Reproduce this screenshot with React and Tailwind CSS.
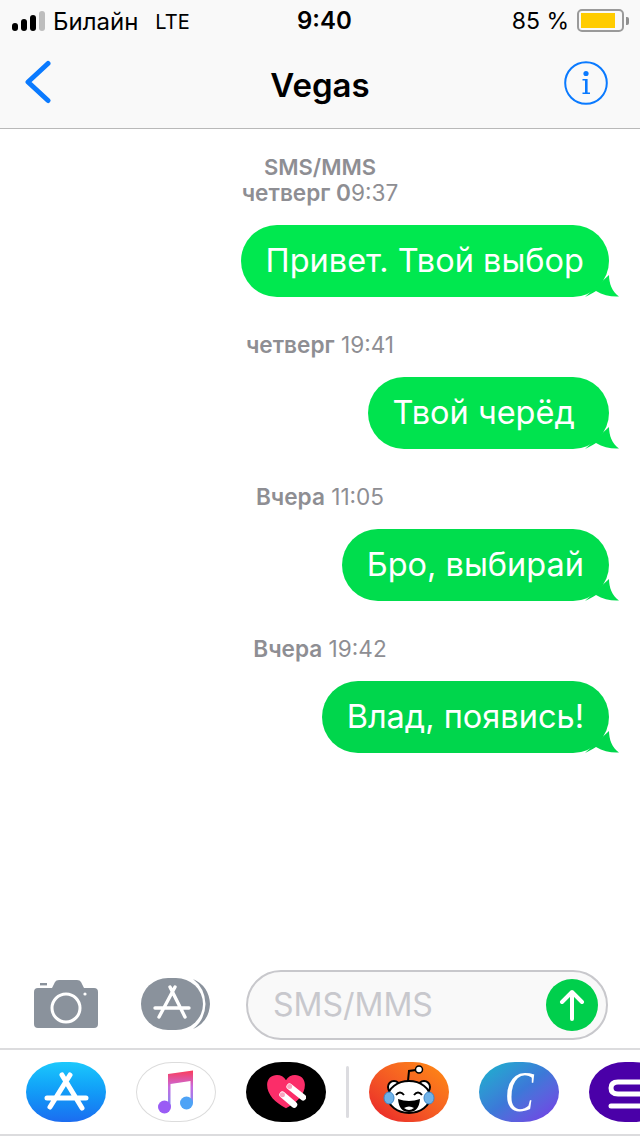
// App.jsx
import React from 'react';

const FONT = "font-['Inter','Noto_Sans',sans-serif]";

const messages = [
    { id: 1, heading: 'SMS/MMS', day: 'четверг 0', time: '9:37', text: 'Привет. Твой выбор', bubble: 'bg-[#00e84f]', tail: 'text-[#00e84f]' },
    { id: 2, day: 'четверг', time: ' 19:41', text: 'Твой черёд ', bubble: 'bg-[#00e34e]', tail: 'text-[#00e34e]' },
    { id: 3, day: 'Вчера', time: ' 11:05', text: 'Бро, выбирай', bubble: 'bg-[#00dd4d]', tail: 'text-[#00dd4d]' },
    { id: 4, day: 'Вчера', time: ' 19:42', text: 'Влад, появись!', bubble: 'bg-[#00d64c]', tail: 'text-[#00d64c]' },
];

function StatusBar() {
    return (
        <div className="h-[40px] flex items-center justify-between pl-[12px] pr-[11px] pt-[3px] text-[24px] text-black relative">
            <div className="flex items-center">
                <div className="flex items-end gap-[3px] h-[20px] mb-[2px]">
                    <span className="w-[6px] h-[8px] bg-black rounded-[3px]"></span>
                    <span className="w-[6px] h-[12px] bg-black rounded-[3px]"></span>
                    <span className="w-[6px] h-[16px] bg-black rounded-[3px]"></span>
                    <span className="w-[6px] h-[20px] bg-[#bdbdbd] rounded-[3px]"></span>
                </div>
                <span className="ml-[8px]">Билайн</span>
                <span className="ml-[17px] text-[20px]">LTE</span>
            </div>
            <span className="absolute left-[297px] top-[3px] font-semibold text-[24px]">9:40</span>
            <div className="flex items-center">
                <span className="text-[23px]">85 %</span>
                <div className="ml-[8px] w-[47px] h-[23px] border-2 border-[#9a9a9a] rounded-[5px] p-[2px] pr-[7px] mt-[-2px]">
                    <div className="h-full bg-[#ffcc00]"></div>
                </div>
                <span className="ml-[2px] w-[3px] h-[8px] bg-[#8f8f8f] rounded-r-[2px] mt-[-2px]"></span>
            </div>
        </div>
    );
}

function NavBar() {
    return (
        <div className="h-[89px] border-b border-[#b9b9b9] flex items-center justify-between pl-[24px] pr-[32px] relative">
            <svg className="mt-[-5px]" width="28" height="44" viewBox="0 0 28 44" fill="none">
                <path d="M24 3.5 L4 22 L24 40.5" stroke="#0a7aff" strokeWidth="5" strokeLinecap="round" strokeLinejoin="round" />
            </svg>
            <h1 className="absolute inset-x-0 top-[22px] text-center text-[33px] leading-[46px] font-semibold text-black pointer-events-none">Vegas</h1>
            <svg className="mt-[-2px]" width="44" height="44" viewBox="0 0 44 44" fill="none">
                <circle cx="22" cy="22" r="20.8" stroke="#0a7aff" strokeWidth="2" />
                <circle cx="22" cy="12.5" r="2.6" fill="#0a7aff" />
                <path d="M18.5 18 H23.6 V31.5 H26 V33 H18.5 V31.5 H21 V19.5 H18.5 Z" fill="#0a7aff" />
            </svg>
        </div>
    );
}

function Message({ message }) {
    return (
        <div className="flex flex-col mb-[35px]">
            <div className="text-center text-[22.6px] leading-[26px] text-[#8e8e93]">
                {message.heading && <div className="font-semibold text-[22px]">{message.heading}</div>}
                <div className="whitespace-pre"><span className="font-semibold">{message.day}</span>{message.time}</div>
            </div>
            <div className="flex justify-end pr-[31px] mt-[19px]">
                <div className={`relative h-[72px] rounded-[36px] px-[25px] flex items-center text-white text-[32.5px] whitespace-pre ${message.bubble}`}>
                    {message.text}
                    <svg className={`absolute -right-[10px] bottom-0 ${message.tail}`} width="34" height="22" viewBox="0 0 34 22" fill="currentColor">
                        <path d="M24 0 C24 8 27 17 34 21.5 C26 22 18 20 11 16 C8 18 4 20 0 22 Z" />
                    </svg>
                </div>
            </div>
        </div>
    );
}

function Composer() {
    return (
        <div className="h-[88px] flex items-center pl-[34px] pr-[32px]">
            <svg width="64" height="48" viewBox="0 0 64 48">
                <path d="M4 8 H18 L21 2 Q22 0 25 0 H43 Q46 0 47 2 L50 8 H60 Q64 8 64 12 V44 Q64 48 60 48 H4 Q0 48 0 44 V12 Q0 8 4 8 Z" fill="#8a929c" />
                <rect x="6" y="3" width="7" height="2.4" fill="#8a929c" />
                <circle cx="32" cy="28" r="14" fill="none" stroke="#fff" strokeWidth="3" />
                <circle cx="51" cy="14" r="1.6" fill="#fff" />
            </svg>
            <svg className="ml-[43px]" width="70" height="52" viewBox="0 0 70 52">
                <path d="M52 1 Q68 8 69 26 Q68 44 52 51 Q64 42 64.500 26 Q64 10 52 1 Z" fill="#8a929c" />
                <rect x="0" y="0" width="62" height="52" rx="27" ry="26" fill="#8a929c" />
                <path d="M29 9 L44 39 M34 9 L18 39 M14 30 H48" fill="none" stroke="#fff" strokeWidth="3.400" strokeLinecap="round" />
            </svg>
            <div className="ml-[35px] mt-[2px] flex-1 h-[70px] rounded-[35px] border-2 border-[#c8c8cc] bg-[#f9f9f9] flex items-center justify-between pl-[25px] pr-[8px]">
                <span className="text-[32px] text-[#c8c8cd]">SMS/MMS</span>
                <div className="w-[52px] h-[52px] rounded-full bg-[#00cf4c] flex items-center justify-center">
                    <svg width="26" height="32" viewBox="0 0 26 32" fill="none">
                        <path d="M13 30 V3 M3 13 L13 3 L23 13" stroke="#fff" strokeWidth="4" strokeLinecap="round" strokeLinejoin="round" />
                    </svg>
                </div>
            </div>
        </div>
    );
}

function AppIcon({ className, children }) {
    return (
        <div className={`w-[80px] h-[60px] shrink-0 rounded-[36px/30px] flex items-center justify-center relative ${className}`}>
            {children}
        </div>
    );
}

function Dock() {
    return (
        <div className="h-[88px] border-y-2 border-[#dcdcde] flex items-center pl-[26px] overflow-hidden">
            <AppIcon className="bg-gradient-to-b from-[#1dc8fc] to-[#1c6cf0]">
                <svg width="80" height="60" viewBox="0 0 80 60" fill="none">
                    <path d="M36 13 L56 46 M44 13 L24 45 M21 36 H60" stroke="#fff" strokeWidth="5" strokeLinecap="round" />
                </svg>
            </AppIcon>
            <AppIcon className="ml-[30px] bg-white border border-[#dcdcdc]">
                <svg width="36" height="44" viewBox="0 0 36 44" fill="none">
                    <defs>
                        <linearGradient id="note" x1="0" y1="0" x2="0" y2="1">
                            <stop offset="0" stopColor="#fb3c5a" />
                            <stop offset="0.45" stopColor="#c76be0" />
                            <stop offset="1" stopColor="#7d8df2" />
                        </linearGradient>
                    </defs>
                    <path d="M10 4 L35 0.500 V33 H32.500 V11 L12.500 14 V37 H10 Z" fill="url(#note)" />
                    <circle cx="6.500" cy="37" r="6.500" fill="#9a5cf5" />
                    <circle cx="28.500" cy="33" r="6.500" fill="#4ea3f6" />
                </svg>
            </AppIcon>
            <AppIcon className="ml-[30px] bg-black">
                <svg width="40" height="36" viewBox="0 0 44 40">
                    <path d="M22 38 C10 32 1 23 1 12 C1 5 6 1 12 1 C16 1 20 3 22 7 C24 3 28 1 32 1 C38 1 43 5 43 12 C43 23 34 32 22 38 Z" fill="#fb2d69" />
                    <path d="M26 14 L41 26 M18 23 L31 34" stroke="#fff" strokeWidth="7" strokeLinecap="round" />
                    <circle cx="26" cy="14" r="2.800" fill="#f9a4bf" />
                    <circle cx="18" cy="23" r="2.800" fill="#f9a4bf" />
                </svg>
            </AppIcon>
            <div className="ml-[20px] w-[3px] h-[52px] bg-[#dcdce0] rounded-[2px] shrink-0"></div>
            <AppIcon className="ml-[20px] bg-gradient-to-tr from-[#e8112a] to-[#ff8c0e]">
                <svg width="64" height="54" viewBox="0 0 64 54" fill="none">
                    <path d="M31 16 L32 6 L39 5" stroke="#000" strokeWidth="2" />
                    <circle cx="42" cy="4.500" r="3.500" fill="#fff" stroke="#000" strokeWidth="1.500" />
                    <circle cx="17" cy="22" r="6" fill="#fff" stroke="#000" strokeWidth="2" />
                    <circle cx="47" cy="22" r="6" fill="#fff" stroke="#000" strokeWidth="2" />
                    <ellipse cx="32" cy="32" rx="21" ry="16" fill="#fff" stroke="#000" strokeWidth="2" />
                    <path d="M19 30 Q23 25 27 30 M37 30 Q41 25 45 30" stroke="#000" strokeWidth="2" />
                    <path d="M21 34 Q32 38 43 34 Q42 47 32 47 Q22 47 21 34 Z" fill="#000" />
                    <path d="M27 43 Q32 40 37 43 Q32 47 27 43 Z" fill="#fff" />
                    <ellipse cx="12" cy="33" rx="5" ry="6" fill="#6fb2e8" stroke="#3d86c8" />
                    <ellipse cx="52" cy="33" rx="5" ry="6" fill="#6fb2e8" stroke="#3d86c8" />
                </svg>
            </AppIcon>
            <AppIcon className="ml-[30px] bg-gradient-to-br from-[#0fb5cc] via-[#3c78d8] to-[#7434e6]">
                <span className="font-['Liberation_Serif',serif] italic text-white text-[58px] leading-[60px] scale-x-75">C</span>
            </AppIcon>
            <AppIcon className="ml-[30px] bg-[#4a00a8]">
                <svg width="80" height="60" viewBox="0 0 80 60" fill="none">
                    <path d="M62 20 H29 Q22 20 22 26 Q22 32 29 32 H62" stroke="#fff" strokeWidth="5" />
                    <path d="M22 44 H62" stroke="#fff" strokeWidth="5" strokeLinecap="round" />
                </svg>
            </AppIcon>
        </div>
    );
}

function App() {
    return (
        <div className={`w-[640px] h-[1136px] bg-white flex flex-col overflow-hidden ${FONT}`}>
            <header className="bg-[#f9f9f9]">
                <StatusBar />
                <NavBar />
            </header>
            <main className="flex-1 pt-[25px]">
                {messages.map((message) => (
                    <Message key={message.id} message={message} />
                ))}
            </main>
            <Composer />
            <Dock />
        </div>
    );
}

export default App;
